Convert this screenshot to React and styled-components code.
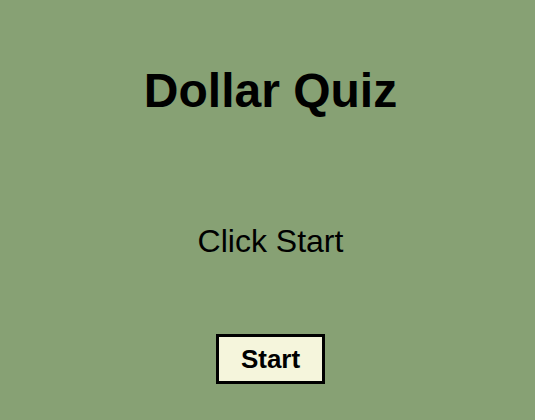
import React from "react";
import styled, { createGlobalStyle } from "styled-components";

const Global = createGlobalStyle`
  html, body { margin: 0; padding: 0; background: #87a174; }
  body { font-family: "Liberation Sans", Arial, sans-serif; color: #000; }
`;

const Page = styled.main`
  min-height: 420px;
  display: flex;
  flex-direction: column;
  align-items: center;
  padding: 63px 0 0 6px;
  box-sizing: border-box;
`;

const Title = styled.h1`
  margin: 0;
  font-size: 48px;
  font-weight: bold;
  line-height: 55px;
`;

const Prompt = styled.p`
  margin: 105px 0 0;
  font-size: 32px;
  line-height: 37px;
`;

const StartButton = styled.button`
  margin-top: 74px;
  font-family: inherit;
  font-size: 26px;
  font-weight: bold;
  color: #000;
  background: #f5f5dc;
  border: 3px solid #000;
  padding: 0 22px;
  height: 50px;
  cursor: pointer;
`;

export default function App() {
  return (
    <>
      <Global />
      <Page>
        <Title>Dollar Quiz</Title>
        <Prompt>Click Start</Prompt>
        <StartButton>Start</StartButton>
      </Page>
    </>
  );
}
